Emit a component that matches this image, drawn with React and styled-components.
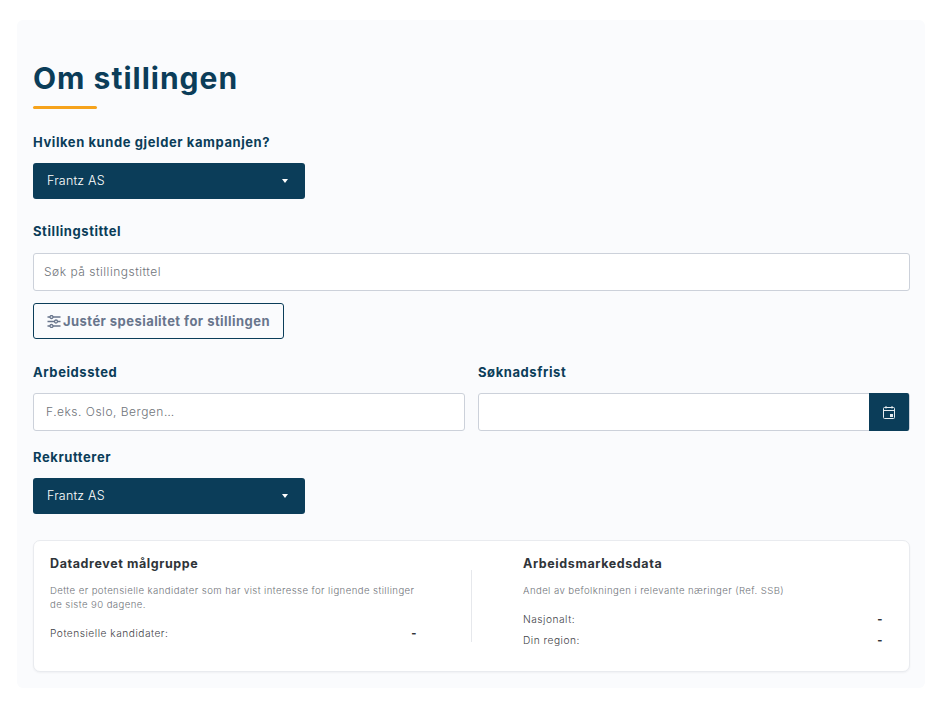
import styled, { createGlobalStyle } from 'styled-components'

const GlobalStyle = createGlobalStyle`
  * {
    box-sizing: border-box;
  }

  body {
    margin: 0;
    background: #fff;
    font-family: Inter, "Open Sans", sans-serif;
  }
`

const Page = styled.div`
  padding: 20px 18px 14px 17px;
`

const Panel = styled.section`
  height: 668px;
  padding: 40px 15px 16px 16px;
  background: #fafbfd;
  border-radius: 6px;
`

const Title = styled.h1`
  margin: 0;
  font-size: 30px;
  line-height: 36px;
  font-weight: 700;
  letter-spacing: 1px;
  color: #0b3d59;
`

const Underline = styled.div`
  width: 64px;
  height: 3px;
  margin: 10px 0 25px;
  background: #f6a31c;
  border-radius: 2px;
`

const Label = styled.label`
  display: block;
  height: 16px;
  margin-bottom: ${p => p.$gap || 13}px;
  font-size: 13px;
  line-height: 16px;
  font-weight: 700;
  letter-spacing: 0.58px;
  color: #0b3d59;
`

const Select = styled.div`
  display: flex;
  align-items: center;
  justify-content: space-between;
  width: 272px;
  height: 36px;
  margin-bottom: ${p => p.$after}px;
  padding: 0 17px 2px 14px;
  background: #0b3d59;
  border-radius: 3px;
  font-size: 12.5px;
  font-weight: 300;
  letter-spacing: 0.2px;
  color: #fff;
`

const Caret = styled.span`
  width: 0;
  height: 0;
  margin-top: 2px;
  border-left: 3.5px solid transparent;
  border-right: 3.5px solid transparent;
  border-top: 4px solid #fff;
`

const Input = styled.div`
  display: flex;
  align-items: center;
  height: 38px;
  padding: 0 10px 2px ${p => p.$left || 10}px;
  background: #fff;
  border: 1px solid #ccd1da;
  border-radius: 3px;
  font-size: 12px;
  font-weight: 300;
  letter-spacing: 0.5px;
  color: #70747a;
`

const AdjustButton = styled.button`
  display: flex;
  align-items: center;
  gap: 2px;
  width: 251px;
  height: 36px;
  margin: 12px 0 25px;
  padding: 0 0 0 13px;
  background: transparent;
  border: 1px solid #0b3d59;
  border-radius: 3px;
  font-family: inherit;
  font-size: 13px;
  font-weight: 700;
  letter-spacing: 0.45px;
  color: #68758c;
`

const TwoCols = styled.div`
  display: grid;
  grid-template-columns: 432px 432px;
  gap: 13px;
  margin-bottom: 18px;
`

const DateField = styled.div`
  display: flex;
  height: 38px;
  background: #fff;
  border: 1px solid #ccd1da;
  border-radius: 3px;
`

const DateButton = styled.div`
  display: flex;
  align-items: center;
  justify-content: center;
  width: 40px;
  margin: -1px 0 -1px auto;
  background: #0b3d59;
  border-radius: 0 2px 2px 0;
`

const Card = styled.div`
  display: grid;
  grid-template-columns: 438px 1fr;
  height: 132px;
  margin-top: 26px;
  background: #fff;
  border: 1px solid #e9ebef;
  border-radius: 7px;
  box-shadow: 0 1px 2px rgba(30, 40, 60, 0.05);
`

const Left = styled.div`
  padding: 15px 55px 0 16px;
`

const Right = styled.div`
  position: relative;
  padding: 15px 26px 0 51px;

  &::before {
    content: '';
    position: absolute;
    left: -1px;
    top: 29px;
    width: 1px;
    height: 72px;
    background: #e6e8ec;
  }
`

const CardTitle = styled.h3`
  margin: 0 0 12px;
  font-size: 12.5px;
  line-height: 16px;
  font-weight: 700;
  letter-spacing: 0.6px;
  color: #2f3439;
`

const CardText = styled.p`
  margin: 0 0 ${p => p.$after}px;
  font-size: 9.6px;
  font-weight: 300;
  line-height: 14px;
  letter-spacing: 0.42px;
  color: #70747a;
`

const StatRow = styled.div`
  display: flex;
  justify-content: space-between;
  height: 14px;
  margin-bottom: 7px;
  font-size: 10.2px;
  font-weight: 300;
  line-height: 14px;
  letter-spacing: 0.5px;
  color: #3f4348;
`

const StatValue = styled.span`
  font-size: 11px;
  font-weight: 800;
  color: #2f3439;
`

const SlidersIcon = () => (
  <svg width="14" height="13" viewBox="0 0 14 13" fill="none" stroke="#68758c" strokeWidth="1.3">
    <path d="M0.5 2h2.5M6 2h7.5M0.5 6.5h7M10.5 6.5h3M0.5 11h2.5M6 11h7.5" />
    <circle cx="4.5" cy="2" r="1.5" />
    <circle cx="9" cy="6.5" r="1.5" />
    <circle cx="4.5" cy="11" r="1.5" />
  </svg>
)

const CalendarIcon = () => (
  <svg width="12" height="13" viewBox="0 0 12 13" fill="none" stroke="#e8edf0" strokeWidth="1">
    <rect x="0.5" y="1.5" width="11" height="11" rx="1" />
    <path d="M0.5 4.5h11M3 0v2.5M9 0v2.5" />
    <rect x="7" y="8" width="3" height="3" fill="#e8edf0" stroke="none" />
  </svg>
)

const App = () => (
  <Page>
    <GlobalStyle />
    <Panel>
      <Title>Om stillingen</Title>
      <Underline />

      <Label>Hvilken kunde gjelder kampanjen?</Label>
      <Select $after={24}>
        Frantz AS
        <Caret />
      </Select>

      <Label $gap={14}>Stillingstittel</Label>
      <Input>Søk på stillingstittel</Input>
      <AdjustButton>
        <SlidersIcon />
        Justér spesialitet for stillingen
      </AdjustButton>

      <TwoCols>
        <div>
          <Label>Arbeidssted</Label>
          <Input $left={12}>F.eks. Oslo, Bergen…</Input>
        </div>
        <div>
          <Label>Søknadsfrist</Label>
          <DateField>
            <DateButton>
              <CalendarIcon />
            </DateButton>
          </DateField>
        </div>
      </TwoCols>

      <Label>Rekrutterer</Label>
      <Select $after={0}>
        Frantz AS
        <Caret />
      </Select>

      <Card>
        <Left>
          <CardTitle>Datadrevet målgruppe</CardTitle>
          <CardText $after={14}>
            Dette er potensielle kandidater som har vist interesse for lignende stillinger de siste 90 dagene.
          </CardText>
          <StatRow>
            Potensielle kandidater:
            <StatValue>-</StatValue>
          </StatRow>
        </Left>
        <Right>
          <CardTitle>Arbeidsmarkedsdata</CardTitle>
          <CardText $after={14}>Andel av befolkningen i relevante næringer (Ref. SSB)</CardText>
          <StatRow>
            Nasjonalt:
            <StatValue>-</StatValue>
          </StatRow>
          <StatRow>
            Din region:
            <StatValue>-</StatValue>
          </StatRow>
        </Right>
      </Card>
    </Panel>
  </Page>
)

export default App
